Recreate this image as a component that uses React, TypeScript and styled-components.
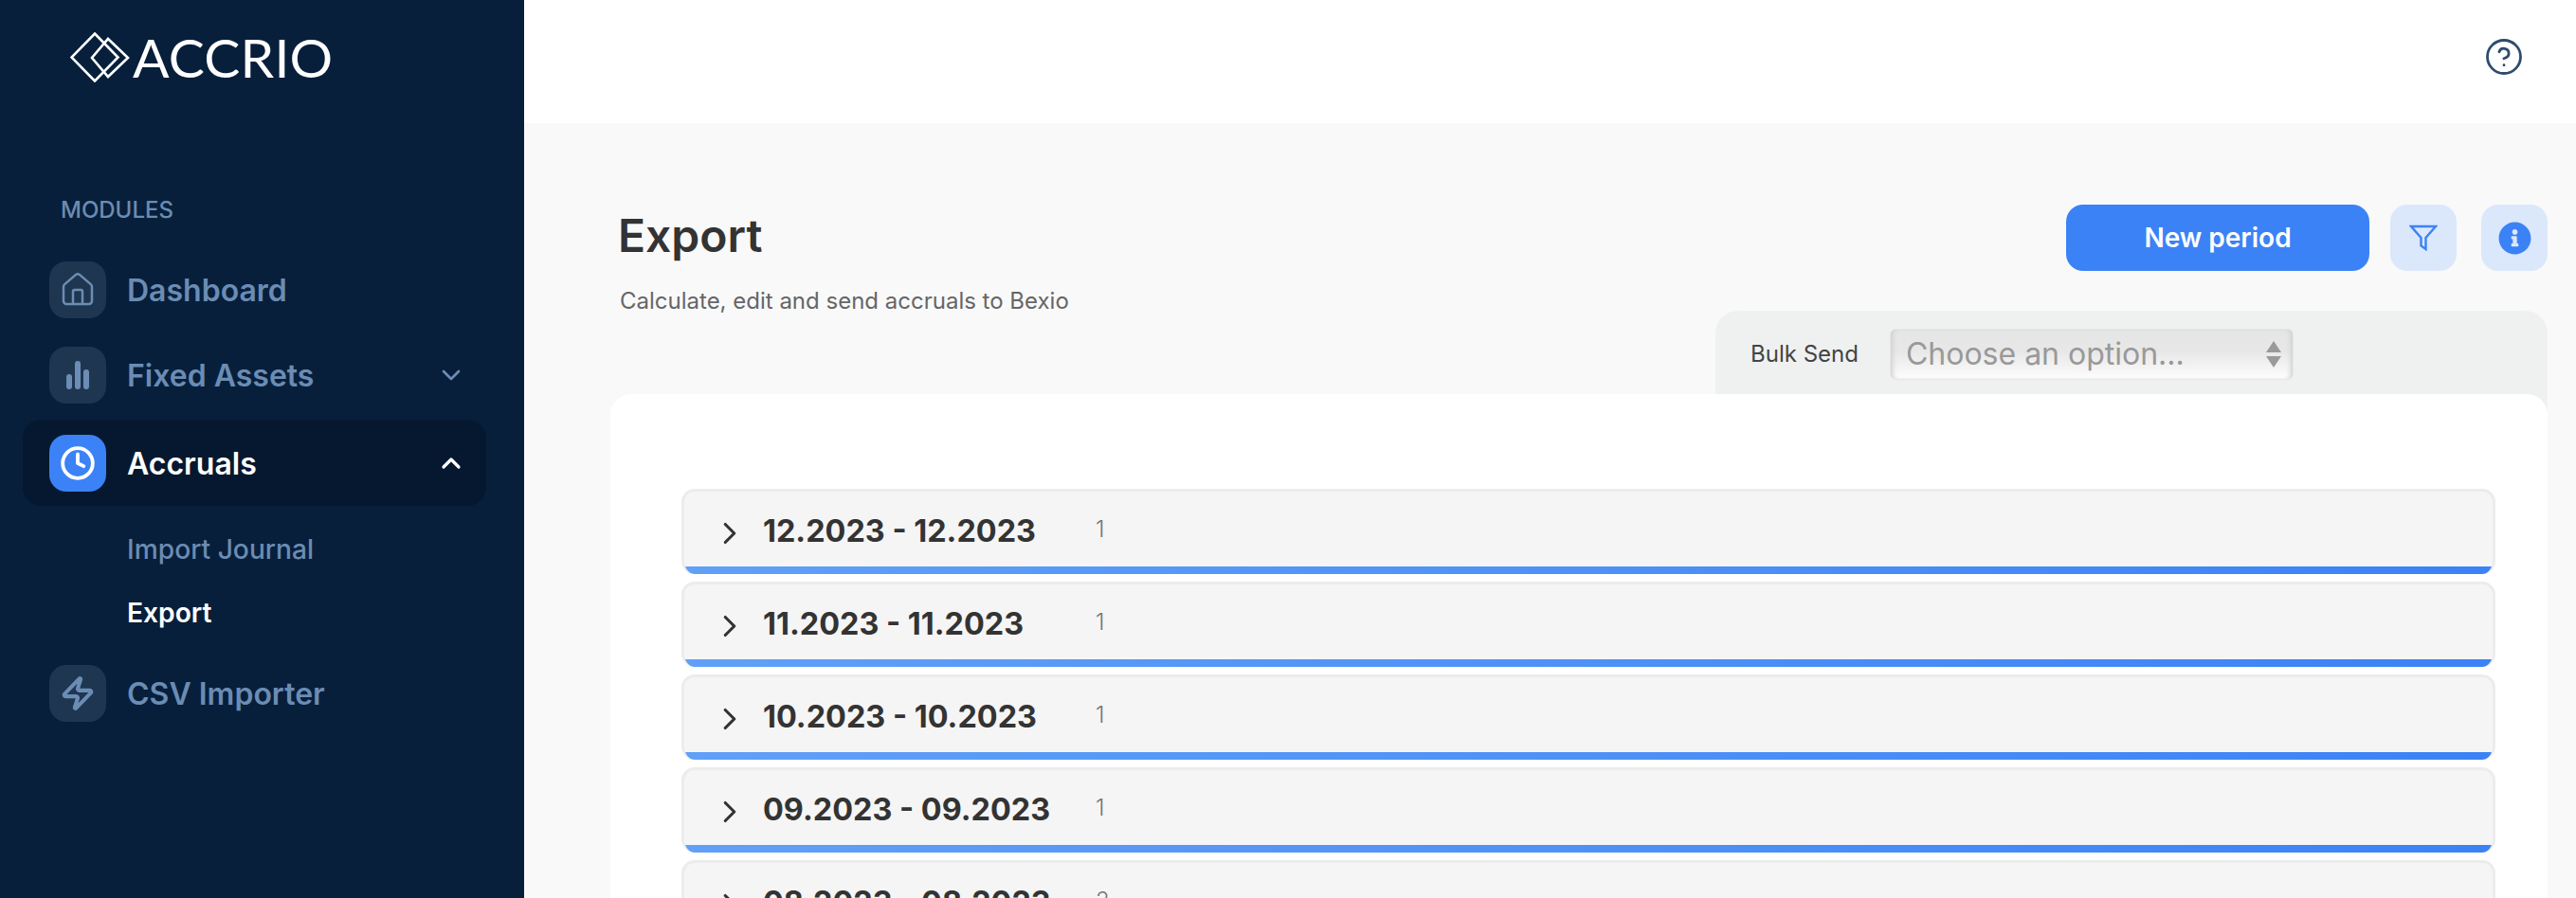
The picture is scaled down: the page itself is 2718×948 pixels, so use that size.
import React from "react";
import styled, { createGlobalStyle } from "styled-components";
import { ChevronDown, ChevronRight, ChevronUp, CircleHelp, Clock, House, Zap } from "lucide-react";
import { FaInfoCircle } from "react-icons/fa";

const GlobalStyle = createGlobalStyle`
  html, body {
    margin: 0;
    height: 100%;
    overflow: hidden;
    font-family: "Inter", "Liberation Sans", sans-serif;
  }
  * {
    box-sizing: border-box;
  }
`;

const Page = styled.div`
  display: flex;
  height: 948px;
  overflow: hidden;
  background: #f9f9f9;
`;

const Sidebar = styled.aside`
  flex: 0 0 553px;
  background: #071f3b;
  padding: 34px 40px 0 24px;
  display: flex;
  flex-direction: column;
`;

const Logo = styled.div`
  display: flex;
  align-items: center;
  gap: 3px;
  height: 52px;
  margin-left: 50px;
  color: #fff;
`;

const LogoText = styled.span`
  font-family: "Lato", sans-serif;
  font-size: 57px;
  line-height: 52px;
  font-weight: 400;
  letter-spacing: 0.2px;
`;

const SectionLabel = styled.div`
  margin: 124px 0 0 40px;
  font-size: 24px;
  line-height: 24px;
  font-weight: 500;
  color: #6b8cb4;
`;

const Nav = styled.nav`
  margin-top: 42px;
  display: flex;
  flex-direction: column;
`;

const NavRow = styled.div<{ $active?: boolean }>`
  display: flex;
  align-items: center;
  gap: 22px;
  height: 91px;
  padding: 0 21px 0 28px;
  border-radius: 20px;
  background: ${(p) => (p.$active ? "#06182f" : "transparent")};
  color: ${(p) => (p.$active ? "#fff" : "#6b8cb4")};
`;

const Plain = styled(NavRow)`
  height: 60px;
  margin-bottom: 30px;
  &:nth-child(2) {
    margin-bottom: 17px;
  }
`;

const IconTile = styled.div<{ $active?: boolean }>`
  flex: 0 0 60px;
  height: 60px;
  border-radius: 18px;
  display: flex;
  align-items: center;
  justify-content: center;
  background: ${(p) => (p.$active ? "#3b82f6" : "#1f3650")};
  color: ${(p) => (p.$active ? "#fff" : "#6b8cb4")};
`;

const NavLabel = styled.span`
  flex: 1;
  padding-top: 2px;
  font-size: 32px;
  line-height: 40px;
  font-weight: 600;
`;

const SubNav = styled.div`
  display: flex;
  flex-direction: column;
  gap: 32px;
  padding: 29px 0 0 110px;
  margin-bottom: 37px;
`;

const SubLink = styled.span<{ $active?: boolean }>`
  font-size: 28.2px;
  line-height: 35px;
  font-weight: ${(p) => (p.$active ? 600 : 500)};
  color: ${(p) => (p.$active ? "#fff" : "#6b8cb4")};
`;

const Main = styled.main`
  flex: 1;
  min-width: 0;
  display: flex;
  flex-direction: column;
`;

const TopBar = styled.header`
  flex: 0 0 130px;
  background: #fff;
  display: flex;
  align-items: center;
  justify-content: flex-end;
  padding: 0 55px 10px 0;
  color: #2f4b6e;
`;

const Content = styled.div`
  flex: 1;
  display: flex;
  flex-direction: column;
  padding: 86px 30px 0 91px;
`;

const TitleRow = styled.div`
  display: flex;
  justify-content: space-between;
  align-items: flex-start;
  height: 112px;
`;

const TitleBlock = styled.div`
  padding: 7px 0 0 8px;
`;

const Title = styled.h1`
  margin: 0;
  font-size: 48px;
  line-height: 52px;
  font-weight: 600;
  color: #333;
`;

const Subtitle = styled.p`
  margin: 28px 0 0 2px;
  font-size: 24px;
  line-height: 30px;
  font-weight: 400;
  color: #666;
`;

const Actions = styled.div`
  display: flex;
  gap: 26px;
`;

const PrimaryButton = styled.button`
  width: 320px;
  height: 70px;
  margin-right: -4px;
  border: 0;
  border-radius: 18px;
  background: #3b82f6;
  color: #fff;
  font: 600 28px "Inter", sans-serif;
`;

const IconButton = styled.button`
  width: 70px;
  height: 70px;
  border: 0;
  border-radius: 18px;
  background: #dbe7fb;
  color: #3b82f6;
  display: flex;
  align-items: center;
  justify-content: center;
  padding: 0;
`;

const BulkPanel = styled.div`
  align-self: flex-end;
  width: 878px;
  height: 112px;
  margin-bottom: -24px;
  padding: 19px 0 0 37px;
  display: flex;
  align-items: flex-start;
  gap: 33px;
  border-radius: 24px 24px 0 0;
  background: #eff1f1;
`;

const BulkLabel = styled.span`
  font-size: 24px;
  line-height: 54px;
  font-weight: 400;
  color: #444;
`;

const FakeSelect = styled.div`
  position: relative;
  width: 426px;
  height: 54px;
  padding-left: 16px;
  border-radius: 6px;
  border: 1px solid #e6e6e6;
  background: linear-gradient(#e5e5e5 0%, #e8e8e8 45%, #fdfdfd 100%);
  box-shadow: inset 5px 0 5px -3px #cfcfcf, inset -5px 0 5px -3px #cfcfcf;
  font-size: 32px;
  line-height: 52px;
  color: #999;
`;

const SelectArrows = styled.svg`
  position: absolute;
  right: 12px;
  top: 12px;
`;

const Card = styled.section`
  position: relative;
  flex: 1;
  padding: 100px 55px 0 75px;
  border-radius: 22px 22px 0 0;
  background: #fff;
  display: flex;
  flex-direction: column;
  gap: 8px;
`;

const Period = styled.div`
  flex: 0 0 90px;
  display: flex;
  align-items: flex-start;
  padding: 22px 0 0 29px;
  border: 3px solid #ececec;
  border-bottom: 0;
  border-radius: 14px;
  position: relative;
  overflow: hidden;
  background: #f5f5f5;
  color: #333;
`;

const PeriodBar = styled.div`
  position: absolute;
  left: 0;
  right: 0;
  bottom: 0;
  height: 8px;
  background: linear-gradient(90deg, #60a0f8, #3b82f6);
`;

const PeriodTitle = styled.span`
  margin-left: 16px;
  width: 351px;
  font-size: 32.4px;
  line-height: 40px;
  font-weight: 700;
`;

const PeriodCount = styled.span`
  font-size: 24px;
  line-height: 30px;
  margin-top: 3px;
  font-weight: 300;
  color: #777;
`;

const ChevronSlot = styled.span`
  height: 40px;
  display: flex;
  align-items: center;
  margin-top: 2px;
`;

const periods = [
  { label: "12.2023 - 12.2023", count: 1 },
  { label: "11.2023 - 11.2023", count: 1 },
  { label: "10.2023 - 10.2023", count: 1 },
  { label: "09.2023 - 09.2023", count: 1 },
  { label: "08.2023 - 08.2023", count: 2 },
];

const LogoMark = () => (
  <svg width="63" height="53" viewBox="0 0 63 53" fill="none" stroke="currentColor" strokeWidth="2.6">
    <path d="M26 1.5 L50.5 26.5 L26 51.5 L1.5 26.5 Z" />
    <path d="M40 7 L61 27 L40 47 L23 27 Z" />
  </svg>
);

const BarsIcon = () => (
  <svg width="24" height="30" viewBox="0 0 24 30" fill="currentColor">
    <rect x="0" y="14" width="6" height="16" rx="3" />
    <rect x="9" y="0" width="6" height="30" rx="3" />
    <rect x="18" y="9" width="6" height="21" rx="3" />
  </svg>
);

const FunnelIcon = () => (
  <svg width="30" height="28" viewBox="0 0 30 28" fill="none" stroke="currentColor" strokeWidth="2.4" strokeLinejoin="miter">
    <path d="M2 2 H28 L17.5 14 V26 L12.5 22.5 V14 Z" />
  </svg>
);

export default function App() {
  return (
    <Page>
      <GlobalStyle />
      <Sidebar>
        <Logo>
          <LogoMark />
          <LogoText>ACCRIO</LogoText>
        </Logo>
        <SectionLabel>MODULES</SectionLabel>
        <Nav>
          <Plain>
            <IconTile>
              <House size={40} strokeWidth={1.5} />
            </IconTile>
            <NavLabel>Dashboard</NavLabel>
          </Plain>
          <Plain>
            <IconTile>
              <BarsIcon />
            </IconTile>
            <NavLabel>Fixed Assets</NavLabel>
            <ChevronDown size={32} strokeWidth={2} />
          </Plain>
          <NavRow $active>
            <IconTile $active>
              <Clock size={38} strokeWidth={2.4} />
            </IconTile>
            <NavLabel>Accruals</NavLabel>
            <ChevronUp size={32} strokeWidth={2.4} />
          </NavRow>
          <SubNav>
            <SubLink>Import Journal</SubLink>
            <SubLink $active>Export</SubLink>
          </SubNav>
          <Plain>
            <IconTile>
              <Zap size={38} strokeWidth={2.6} />
            </IconTile>
            <NavLabel>CSV Importer</NavLabel>
          </Plain>
        </Nav>
      </Sidebar>
      <Main>
        <TopBar>
          <CircleHelp size={42} strokeWidth={1.6} />
        </TopBar>
        <Content>
          <TitleRow>
            <TitleBlock>
              <Title>Export</Title>
              <Subtitle>Calculate, edit and send accruals to Bexio</Subtitle>
            </TitleBlock>
            <Actions>
              <PrimaryButton>New period</PrimaryButton>
              <IconButton>
                <FunnelIcon />
              </IconButton>
              <IconButton>
                <FaInfoCircle size={35} />
              </IconButton>
            </Actions>
          </TitleRow>
          <BulkPanel>
            <BulkLabel>Bulk Send</BulkLabel>
            <FakeSelect>
              Choose an option...
              <SelectArrows width="16" height="28" viewBox="0 0 16 28" fill="#9a9a9a">
                <path d="M8 0 L16 12 H0 Z" />
                <path d="M0 16 H16 L8 28 Z" />
              </SelectArrows>
            </FakeSelect>
          </BulkPanel>
          <Card>
            {periods.map((period) => (
              <Period key={period.label}>
                <ChevronSlot>
                  <ChevronRight size={38} strokeWidth={2} />
                </ChevronSlot>
                <PeriodTitle>{period.label}</PeriodTitle>
                <PeriodCount>{period.count}</PeriodCount>
                <PeriodBar />
              </Period>
            ))}
          </Card>
        </Content>
      </Main>
    </Page>
  );
}
